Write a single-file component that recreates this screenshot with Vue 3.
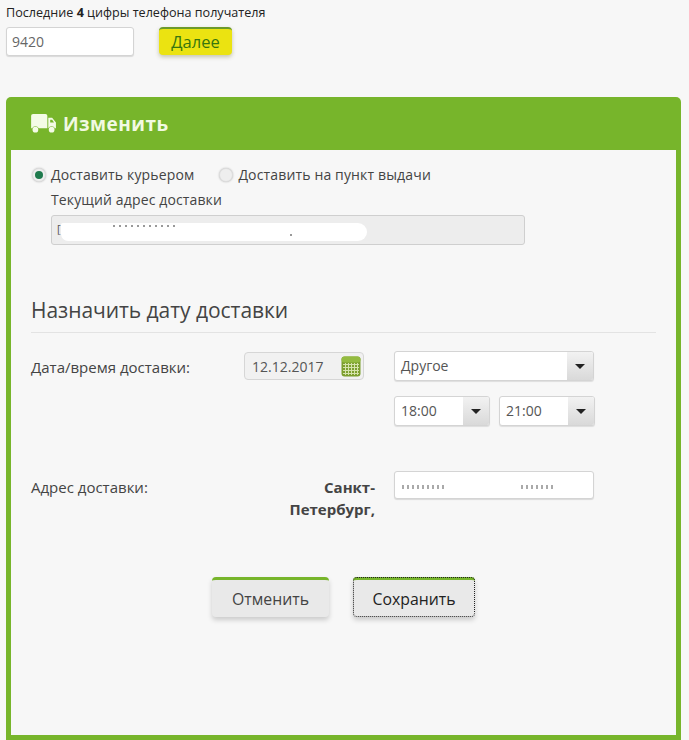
<script setup>
const times = ['18:00', '21:00']
</script>

<template>
  <div class="page">
    <div class="lookup">
      <div class="lookup-label">Последние <b>4</b> цифры телефона получателя</div>
      <div class="lookup-row">
        <div class="field phone">9420</div>
        <button class="next">Далее</button>
      </div>
    </div>

    <section class="panel">
      <header class="panel-head">
        <svg class="truck" width="26" height="21" viewBox="0 0 27 22">
          <path fill="#f4fbe6" d="M2 1h13a2 2 0 0 1 2 2v13H8a4 4 0 0 0-7 0H0V3a2 2 0 0 1 2-2zM18 5h4l4 5v6h-1a4 4 0 0 0-7 0z"/>
          <path fill="#77b52b" d="M20 7h2l2 3h-4z"/>
          <circle cx="4.500" cy="17.500" r="3" fill="#f4fbe6"/>
          <circle cx="21.500" cy="17.500" r="3" fill="#f4fbe6"/>
        </svg>
        <h2>Изменить</h2>
      </header>

      <div class="panel-body">
        <div class="radios">
          <label class="radio"><span class="dot on"></span>Доставить курьером</label>
          <label class="radio"><span class="dot"></span>Доставить на пункт выдачи</label>
        </div>
        <div class="current">
          <div class="current-label">Текущий адрес доставки</div>
          <div class="current-field">
            <span class="mark">[</span>
            <span class="blot"><i class="specks"></i><i class="specks short"></i></span>
          </div>
        </div>

        <h3 class="section-title">Назначить дату доставки</h3>

        <div class="form-row date-row">
          <div class="row-label">Дата/время доставки:</div>
          <div class="date">
            <span>12.12.2017</span>
            <svg width="20" height="21" viewBox="0 0 20 21">
              <rect x="0.500" y="0.500" width="19" height="20" rx="3" fill="#7d9f2f"/>
              <rect x="0.500" y="0.500" width="19" height="6" rx="3" fill="#94bb40"/>
              <path stroke="#d5e2ab" stroke-width="1" d="M2 8.500h16M2 11.500h16M2 14.500h16M2 17.500h16M4.500 7v12M7.500 7v12M10.500 7v12M13.500 7v12M16.500 7v12" fill="none"/>
            </svg>
          </div>
          <div class="selects">
            <div class="select wide"><span>Другое</span><i class="arrow"><b></b></i></div>
            <div class="time-row">
              <div v-for="t in times" :key="t" class="select time"><span>{{ t }}</span><i class="arrow"><b></b></i></div>
            </div>
          </div>
        </div>

        <div class="form-row address-row">
          <div class="row-label">Адрес доставки:</div>
          <div class="city">Санкт-<br>Петербург,</div>
          <div class="field street"><span class="street-bit"></span><span class="street-bit right"></span></div>
        </div>

        <div class="actions">
          <button class="action cancel">Отменить</button>
          <button class="action save">Сохранить</button>
        </div>
      </div>
    </section>
  </div>
</template>

<style>
html, body { margin: 0; background: #f7f7f7; }
</style>

<style scoped>
.page {
  width: 689px;
  height: 740px;
  overflow: hidden;
  background: #f7f7f7;
  font-family: "Open Sans", sans-serif;
  color: #333;
  font-size: 14px;
  box-sizing: border-box;
  padding: 5px 8px 0 6px;
}
button { font-family: inherit; cursor: pointer; }
.lookup { height: 92px; }
.lookup-label { font-size: 12.6px; line-height: 16px; color: #222; white-space: nowrap; }
.lookup-label b { font-weight: 700; }
.lookup-row { display: flex; align-items: flex-start; gap: 25px; margin-top: 6px; }
.field {
  box-sizing: border-box;
  background: #fff;
  border: 1px solid #d4d4d4;
  border-radius: 3px;
  box-shadow: 0 1px 1px rgba(0,0,0,.12);
}
.phone { width: 128px; height: 29px; line-height: 28px; padding-left: 5px; color: #666; font-size: 14px; }
.next {
  width: 73px; height: 28px; padding: 0 0 2px;
  background: #ebe311;
  border: 0;
  border-top: 2px solid #6c9a2a;
  border-radius: 4px;
  color: #37760f;
  font-size: 16.500px;
  box-shadow: 0 2px 4px rgba(80,80,0,.3);
}
.panel { height: 643px; display: flex; flex-direction: column; }
.panel-head {
  height: 53px;
  flex: none;
  box-sizing: border-box;
  background: #77b52b;
  border-radius: 5px 5px 0 0;
  display: flex;
  align-items: center;
  padding-left: 25px;
  gap: 6px;
}
.panel-head h2 { margin: 0; font-size: 19px; font-weight: 700; color: #f1f9e2; letter-spacing: .45px; }
.panel-body {
  flex: 1;
  box-sizing: border-box;
  border: 5px solid #77b52b;
  border-top: 0;
  padding: 16px 20px 0 20px;
}
.radios { display: flex; gap: 25px; height: 18px; padding-left: 1px; letter-spacing: .15px; }
.radio { display: flex; align-items: center; gap: 5px; line-height: 18px; color: #444; }
.dot {
  width: 14px; height: 14px; border-radius: 50%;
  background: #eee; border: 1px solid #ddd;
  box-shadow: 0 0 2px rgba(0,0,0,.25);
  box-sizing: border-box;
  display: flex; align-items: center; justify-content: center;
}
.dot.on::after { content: ""; width: 8px; height: 8px; border-radius: 50%; background: #1f7a4d; }
.current { margin-left: 20px; margin-top: 7px; }
.current-label { line-height: 18px; color: #444; letter-spacing: .13px; }
.current-field {
  position: relative;
  box-sizing: border-box;
  margin-top: 6px;
  width: 474px; height: 30px;
  background: #ededed;
  border: 1px solid #cfcfcf;
  border-radius: 3px;
  font-size: 11px;
  line-height: 26px;
  padding-left: 5px;
  color: #555;
}
.blot {
  position: absolute; left: 9px; top: 7px; width: 306px; height: 18px;
  background: #fff; border-radius: 2px 10px 10px 8px;
}
.specks {
  position: absolute; left: 52px; top: 2px; width: 62px; height: 2px;
  background: repeating-linear-gradient(90deg, #999 0 2px, transparent 2px 6px);
}
.specks.short { left: 229px; top: 11px; width: 6px; }
.mark { position: relative; z-index: 1; }
.section-title {
  margin: 50px 0 0;
  font-size: 21px;
  font-weight: 400;
  line-height: 30px;
  color: #444;
  padding-bottom: 7px;
  border-bottom: 1px solid #e3e3e3;
  letter-spacing: -.05px;
}
.form-row { display: flex; align-items: flex-start; }
.date-row { margin-top: 18px; height: 120px; }
.row-label { width: 213px; flex: none; color: #444; font-size: 15px; }
.date-row .row-label { line-height: 32px; }
.date {
  box-sizing: border-box;
  width: 120px; height: 28px;
  margin-top: 1px;
  background: #f1f1f1;
  border: 1px solid #d6d6d6;
  border-radius: 4px;
  display: flex; align-items: center; justify-content: space-between;
  padding: 0 2px 0 7px;
  font-size: 14px; color: #555;
}
.selects { margin-left: 30px; display: flex; flex-direction: column; gap: 15px; }
.select {
  box-sizing: border-box;
  height: 30px;
  background: #fff;
  border: 1px solid #d4d4d4;
  border-radius: 3px;
  display: flex; align-items: stretch; justify-content: space-between;
  padding-left: 6px;
  line-height: 27px;
  font-size: 14px; color: #555;
  box-shadow: 0 1px 1px rgba(0,0,0,.1);
}
.wide { width: 200px; }
.time-row { display: flex; gap: 9px; }
.time { width: 96px; }
.arrow {
  width: 26px;
  background: linear-gradient(#f2f2f2, #d9d9d9);
  display: flex; align-items: center; justify-content: center;
  border-radius: 0 2px 2px 0;
}
.arrow b {
  width: 0; height: 0;
  border-left: 5px solid transparent;
  border-right: 5px solid transparent;
  border-top: 5px solid #222;
}
.address-row { margin-top: 0; }
.address-row .row-label { width: 190px; line-height: 32px; }
.city {
  width: 154px; flex: none; text-align: right; font-size: 15px;
  font-weight: 700; color: #444; line-height: 22px; padding-top: 5px;
}
.street {
  width: 200px; height: 28px; margin-left: 19px;
  position: relative; overflow: hidden;
}
.street-bit {
  position: absolute; left: 7px; top: 13px; width: 44px; height: 4px;
  background: repeating-linear-gradient(90deg, #aaa 0 2px, #fff 2px 5px);
}
.street-bit.right { left: 126px; width: 35px; }
.actions { display: flex; gap: 24px; margin-top: 57px; padding-left: 181px; }
.action {
  box-sizing: border-box;
  width: 117px; height: 40px; padding: 0;
  background: #e9e9e9;
  border: 0;
  border-top: 3px solid #77b52b;
  border-radius: 4px;
  font-size: 15.800px;
  color: #444;
  box-shadow: 0 3px 5px rgba(0,0,0,.18);
}
.save {
  width: 122px;
  color: #222;
  outline: 1px dotted #222;
  outline-offset: -1px;
}
</style>
